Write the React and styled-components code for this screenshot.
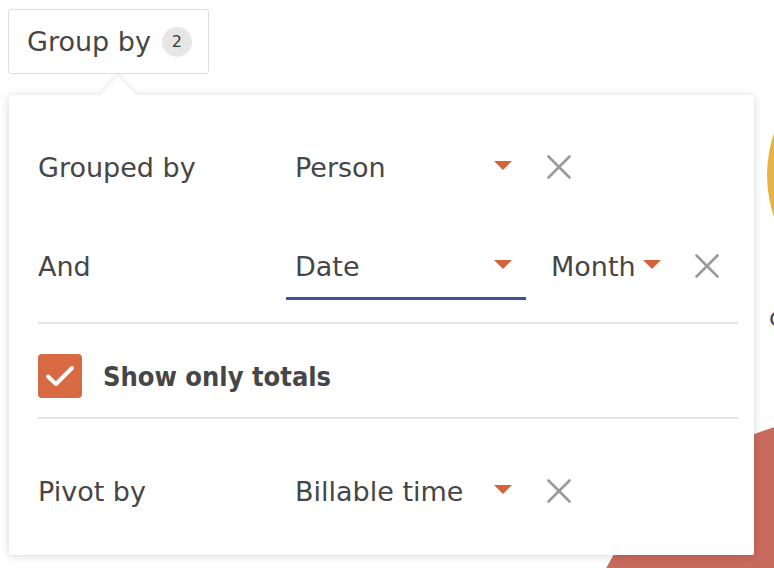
import styled, { createGlobalStyle } from "styled-components";

const GlobalStyle = createGlobalStyle`
    html, body {
        margin: 0;
        padding: 0;
        background: #fff;
    }
    body {
        font-family: "DejaVu Sans", "Open Sans", sans-serif;
        color: #464646;
    }
`;

const Page = styled.div`
    position: relative;
    width: 774px;
    height: 568px;
    overflow: hidden;
    padding: 9px 0 0 8px;
    box-sizing: border-box;
`;

const Blob = styled.div`
    position: absolute;
    border-radius: 50%;
    left: ${(p) => p.$cx - p.$r}px;
    top: ${(p) => p.$cy - p.$r}px;
    width: ${(p) => p.$r * 2}px;
    height: ${(p) => p.$r * 2}px;
    background: ${(p) => p.$color};
`;

const StrayLabel = styled.span`
    position: absolute;
    left: 769px;
    top: 304px;
    font-size: 24px;
    color: #444;
`;

const Trigger = styled.button`
    position: relative;
    display: inline-flex;
    align-items: center;
    gap: 11px;
    width: 201px;
    height: 65px;
    box-sizing: border-box;
    padding: 0 0 0 18px;
    background: #fff;
    border: 1.5px solid #dedede;
    border-radius: 3px;
    font-family: inherit;
    font-size: 27px;
    color: #464646;
    cursor: pointer;
`;

const Badge = styled.span`
    display: inline-flex;
    align-items: center;
    justify-content: center;
    width: 30px;
    height: 30px;
    border-radius: 50%;
    background: #e6e6e6;
    font-size: 16px;
    color: #3a3a3a;
`;

const Popover = styled.div`
    position: relative;
    margin: 21px 0 0 1px;
    width: 745px;
    height: 460px;
    box-sizing: border-box;
    padding: 38px 16px 30px 29px;
    background: #fff;
    border-radius: 2px;
    box-shadow: 0 1px 8px rgba(0, 0, 0, 0.16);

    &::before {
        content: "";
        position: absolute;
        left: 96px;
        top: -13px;
        width: 26px;
        height: 26px;
        background: #fff;
        transform: rotate(45deg);
        box-shadow: -3px -3px 5px rgba(0, 0, 0, 0.06);
    }
`;

const Row = styled.div`
    display: flex;
    align-items: center;
    height: 68px;
    margin-top: ${(p) => p.$top || 0}px;
`;

const Label = styled.span`
    width: 248px;
    font-size: 27px;
    color: #464646;
`;

const Select = styled.div`
    display: flex;
    align-items: center;
    justify-content: space-between;
    width: ${(p) => p.$width}px;
    height: 68px;
    box-sizing: border-box;
    padding: 3px 14px 0 9px;
    margin-right: ${(p) => p.$gap || 0}px;
    border-bottom: 3px solid ${(p) => (p.$active ? "#3f51a5" : "transparent")};
    font-size: 27px;
    color: #464646;
    white-space: nowrap;
    cursor: pointer;
`;

const Caret = styled.span`
    flex-shrink: 0;
    width: 0;
    height: 0;
    margin-bottom: 4px;
    border-left: 9.5px solid transparent;
    border-right: 9.5px solid transparent;
    border-top: 9px solid #d4633a;
`;

const RemoveButton = styled.button`
    display: flex;
    align-items: center;
    justify-content: center;
    width: 26px;
    height: 26px;
    margin-left: ${(p) => p.$gap || 20}px;
    padding: 0;
    border: none;
    background: none;
    cursor: pointer;
`;

const Divider = styled.hr`
    margin: ${(p) => p.$top}px 0 0 0;
    border: none;
    height: 2px;
    background: #e4e4e4;
`;

const CheckRow = styled.label`
    display: flex;
    align-items: center;
    gap: 21px;
    margin-top: 30px;
    font-family: "DejaVu Sans Condensed", "DejaVu Sans", sans-serif;
    font-size: 27px;
    font-weight: 700;
    color: #464646;
    cursor: pointer;
`;

const CheckBox = styled.span`
    display: flex;
    align-items: center;
    justify-content: center;
    width: 44px;
    height: 44px;
    border-radius: 4px;
    background: #d76a43;
`;

const CloseIcon = () => (
    <svg width="24" height="24" viewBox="0 0 24 24">
        <path
            d="M1.5 1.5L22.5 22.5M22.5 1.5L1.5 22.5"
            stroke="#9a9a9a"
            strokeWidth="2.6"
            strokeLinecap="round"
        />
    </svg>
);

const Dropdown = ({ value, width = 240, active, gap }) => (
    <Select $width={width} $active={active} $gap={gap}>
        <span>{value}</span>
        <Caret />
    </Select>
);

export default function App() {
    return (
        <>
            <GlobalStyle />
            <Page>
                <Blob $cx={897} $cy={175} $r={130} $color="#e5b445" />
                <Blob $cx={860} $cy={700} $r={286} $color="#c96a5e" />
                <StrayLabel>c</StrayLabel>

                <Trigger>
                    Group by <Badge>2</Badge>
                </Trigger>

                <Popover>
                    <Row>
                        <Label>Grouped by</Label>
                        <Dropdown value="Person" />
                        <RemoveButton>
                            <CloseIcon />
                        </RemoveButton>
                    </Row>
                    <Row $top={31}>
                        <Label>And</Label>
                        <Dropdown value="Date" active gap={16} />
                        <Dropdown value="Month" width={133} />
                        <RemoveButton $gap={19}>
                            <CloseIcon />
                        </RemoveButton>
                    </Row>

                    <Divider $top={22} />

                    <CheckRow>
                        <CheckBox>
                            <svg width="30" height="22" viewBox="0 0 30 22">
                                <path
                                    d="M3 11.5L11 19L27 3"
                                    fill="none"
                                    stroke="#fff"
                                    strokeWidth="4"
                                    strokeLinecap="round"
                                    strokeLinejoin="round"
                                />
                            </svg>
                        </CheckBox>
                        Show only totals
                    </CheckRow>

                    <Divider $top={19} />

                    <Row $top={38}>
                        <Label>Pivot by</Label>
                        <Dropdown value="Billable time" />
                        <RemoveButton>
                            <CloseIcon />
                        </RemoveButton>
                    </Row>
                </Popover>
            </Page>
        </>
    );
}
